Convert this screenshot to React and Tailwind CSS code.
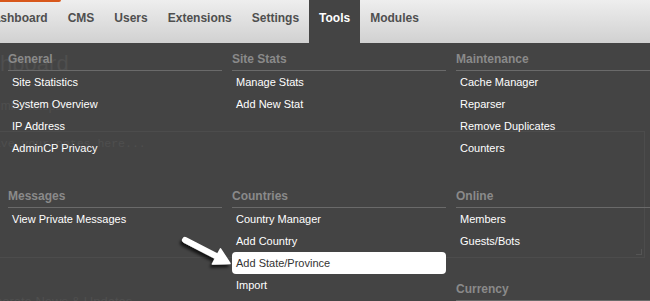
const nav = ['Dashboard', 'CMS', 'Users', 'Extensions', 'Settings', 'Tools', 'Modules'];

const columns = [
  [
    { title: 'General', items: ['Site Statistics', 'System Overview', 'IP Address', 'AdminCP Privacy'] },
    { title: 'Messages', items: ['View Private Messages'] },
  ],
  [
    { title: 'Site Stats', items: ['Manage Stats', 'Add New Stat'], tall: true },
    { title: 'Countries', items: ['Country Manager', 'Add Country', 'Add State/Province', 'Import'] },
  ],
  [
    { title: 'Maintenance', items: ['Cache Manager', 'Reparser', 'Remove Duplicates', 'Counters'] },
    { title: 'Online', items: ['Members', 'Guests/Bots'] },
    { title: 'Currency', items: [] },
  ],
];

const Section = ({ title, items, tall }) => (
  <div className={tall ? 'min-h-[116px] mb-[21px]' : 'mb-[21px]'}>
    <div className="pt-[9px] pb-[4px] border-b border-[#6a6a6a] text-[12px] leading-[14px] font-bold text-[#8a8a8a]">
      {title}
    </div>
    {items.map((item) => (
      <div
        key={item}
        className={
          item === 'Add State/Province'
            ? 'h-[22px] px-1 flex items-center text-[11px] text-[#333] bg-white rounded-[4px]'
            : 'h-[22px] px-1 flex items-center text-[11px] text-white'
        }
      >
        {item}
      </div>
    ))}
  </div>
);

const Arrow = () => (
  <svg className="absolute left-[175px] top-[187px]" width="70" height="50" viewBox="0 0 70 50">
    <defs>
      <filter id="sh" x="-30%" y="-30%" width="160%" height="160%">
        <feDropShadow dx="-2" dy="3" stdDeviation="1.8" floodColor="#000" floodOpacity="0.7" />
      </filter>
    </defs>
    <g filter="url(#sh)" fill="#fff" stroke="#fff">
      <line x1="10" y1="10" x2="42" y2="26.5" strokeWidth="6" strokeLinecap="round" />
      <polygon points="55,33.5 37.5,34 45.5,18.8" strokeWidth="1.5" strokeLinejoin="round" />
    </g>
  </svg>
);

export default function App() {
  return (
    <div className="relative w-[650px] h-[301px] overflow-hidden bg-[#444] font-['Liberation_Sans',Arial,sans-serif]">
      {/* top nav */}
      <div className="relative h-[43px] bg-gradient-to-b from-[#eeeeee] to-[#d1d1d1] flex -ml-[25px]">
        <div className="absolute left-[25px] top-0 w-[61px] h-[2px] bg-[#d8581c] rounded-br-[2px]" />
        {nav.map((n) => (
          <div
            key={n}
            className={
              n === 'Tools'
                ? 'h-[43px] px-[10px] pt-[11px] text-[12px] leading-[14px] font-bold text-white bg-[#444]'
                : 'h-[43px] px-[10px] pt-[11px] text-[12px] leading-[14px] font-bold text-[#4f4f4f]'
            }
          >
            {n}
          </div>
        ))}
      </div>

      {/* page content under the menu */}
      <div className="relative h-[258px] text-[#4f4f4f]">
        <div className="pt-[8px] -ml-[39px] text-[22px] leading-[26px]">Dashboard</div>
        <div className="mt-[22px] -ml-[14px] text-[12px] leading-[14px]">Admin Notepad</div>
        <div className="mt-[18px] -ml-[10px] w-[655px] h-[127px] border border-[#4c4c4c] relative">
          <div className="pt-[5px] -ml-[4px] font-['Liberation_Mono','Courier_New',monospace] text-[11.5px] leading-[14px]">
            Save your notes here...
          </div>
          <div className="absolute right-[2px] bottom-[2px] w-[6px] h-[6px] border-b border-r border-[#555]" />
        </div>
        <div className="mt-[36px] -ml-[26px] text-[13px] leading-[16px]">Corporate News &amp; Updates</div>

        {/* Tools dropdown */}
        <div className="absolute inset-0 pl-[8px] flex gap-[10px]">
          {columns.map((col, i) => (
            <div key={i} className="w-[214px] shrink-0">
              {col.map((s) => (
                <Section key={s.title} {...s} />
              ))}
            </div>
          ))}
          <Arrow />
        </div>
      </div>
    </div>
  );
}
